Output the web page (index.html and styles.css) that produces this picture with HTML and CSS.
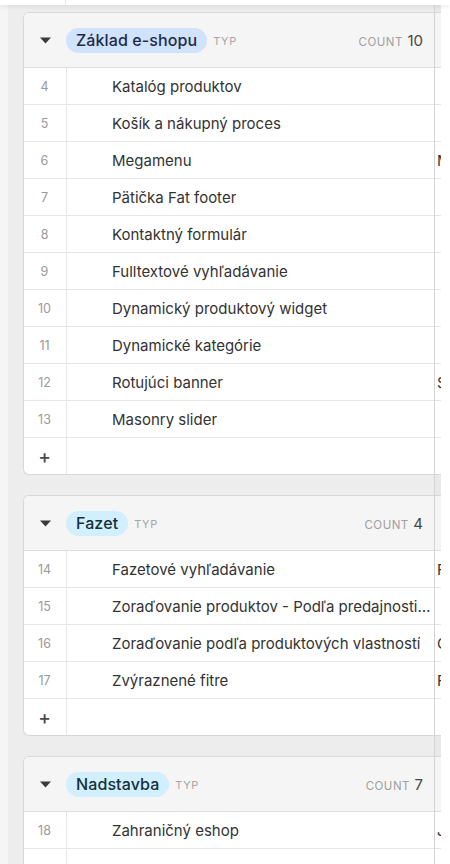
FILE: index.html
```html
<!DOCTYPE html>
<html lang="sk">
<head>
<meta charset="utf-8">
<title>Grid</title>
<link rel="stylesheet" href="styles.css">
</head>
<body>
<div class="topbar"><div class="topbar-col"></div></div>
<div class="grid">
  <div class="pane-left">
    <section class="group">
      <div class="group-head">
        <div class="chev"><svg width="11" height="7" viewBox="0 0 11 7"><path d="M0 0.5 H11 L5.5 6.5 Z" fill="#3a3a3a"/></svg></div>
        <span class="pill pill-blue">Základ e-shopu</span>
        <span class="typ">TYP</span>
        <span class="count"><span class="count-label">COUNT</span> <span class="count-num">10</span></span>
      </div>
      <div class="row"><div class="num">4</div><div class="name"><span class="txt">Katalóg produktov</span></div></div>
      <div class="row"><div class="num">5</div><div class="name"><span class="txt">Košík a nákupný proces</span></div></div>
      <div class="row"><div class="num">6</div><div class="name"><span class="txt">Megamenu</span></div></div>
      <div class="row"><div class="num">7</div><div class="name"><span class="txt">Pätička Fat footer</span></div></div>
      <div class="row"><div class="num">8</div><div class="name"><span class="txt">Kontaktný formulár</span></div></div>
      <div class="row"><div class="num">9</div><div class="name"><span class="txt">Fulltextové vyhľadávanie</span></div></div>
      <div class="row"><div class="num">10</div><div class="name"><span class="txt">Dynamický produktový widget</span></div></div>
      <div class="row"><div class="num">11</div><div class="name"><span class="txt">Dynamické kategórie</span></div></div>
      <div class="row"><div class="num">12</div><div class="name"><span class="txt">Rotujúci banner</span></div></div>
      <div class="row"><div class="num">13</div><div class="name"><span class="txt">Masonry slider</span></div></div>
      <div class="row row-add"><div class="num plus">+</div><div class="name"></div></div>
    </section>
    <section class="group">
      <div class="group-head">
        <div class="chev"><svg width="11" height="7" viewBox="0 0 11 7"><path d="M0 0.5 H11 L5.5 6.5 Z" fill="#3a3a3a"/></svg></div>
        <span class="pill pill-cyan">Fazet</span>
        <span class="typ">TYP</span>
        <span class="count"><span class="count-label">COUNT</span> <span class="count-num">4</span></span>
      </div>
      <div class="row"><div class="num">14</div><div class="name"><span class="txt">Fazetové vyhľadávanie</span></div></div>
      <div class="row"><div class="num">15</div><div class="name"><span class="txt">Zoraďovanie produktov - Podľa predajnosti a hodnotenia</span></div></div>
      <div class="row"><div class="num">16</div><div class="name"><span class="txt">Zoraďovanie podľa produktových vlastností</span></div></div>
      <div class="row"><div class="num">17</div><div class="name"><span class="txt">Zvýraznené fitre</span></div></div>
      <div class="row row-add"><div class="num plus">+</div><div class="name"></div></div>
    </section>
    <section class="group">
      <div class="group-head">
        <div class="chev"><svg width="11" height="7" viewBox="0 0 11 7"><path d="M0 0.5 H11 L5.5 6.5 Z" fill="#3a3a3a"/></svg></div>
        <span class="pill pill-cyan">Nadstavba</span>
        <span class="typ">TYP</span>
        <span class="count"><span class="count-label">COUNT</span> <span class="count-num">7</span></span>
      </div>
      <div class="row"><div class="num">18</div><div class="name"><span class="txt">Zahraničný eshop</span></div></div>
      <div class="row"><div class="num"></div><div class="name"></div></div>
    </section>
  </div>
  <div class="pane-right">
    <section class="group group-r">
      <div class="group-head-r"></div>
      <div class="row-r"></div>
      <div class="row-r"></div>
      <div class="row-r">Menu</div>
      <div class="row-r"></div>
      <div class="row-r"></div>
      <div class="row-r"></div>
      <div class="row-r"></div>
      <div class="row-r"></div>
      <div class="row-r">Slider</div>
      <div class="row-r"></div>
      <div class="row-r row-add"></div>
    </section>
    <section class="group group-r">
      <div class="group-head-r"></div>
      <div class="row-r">Filter</div>
      <div class="row-r"></div>
      <div class="row-r">Custom</div>
      <div class="row-r">Filter</div>
      <div class="row-r row-add"></div>
    </section>
    <section class="group group-r">
      <div class="group-head-r"></div>
      <div class="row-r">Jazyk</div>
      <div class="row-r"></div>
    </section>
  </div>
  <div class="rail"></div>
</div>
</body>
</html>
```
FILE: styles.css
```css
* { box-sizing: border-box; }
html, body {
  margin: 0;
  padding: 0;
  height: 100%;
  overflow: hidden;
}
body {
  background: #eeeeee;
  font-family: Inter, "Noto Sans", "Liberation Sans", sans-serif;
  color: #333;
}
.topbar {
  height: 5px;
  background: #ffffff;
  box-shadow: 0 2px 4px rgba(0, 0, 0, 0.07);
  position: relative;
  z-index: 2;
}
.topbar-col {
  width: 66px;
  height: 100%;
  border-right: 1px solid #e6e6e6;
}
.grid {
  display: flex;
  height: calc(100% - 5px);
}
.pane-left {
  width: 435px;
  flex: none;
  padding: 7px 0 0 23px;
  border-right: 1px solid #d4d4d4;
  background: linear-gradient(to right, #f5f5f5 8px, #ededed 8px);
}
.pane-right {
  width: 6px;
  flex: none;
  overflow: hidden;
  padding-top: 7px;
  background: #e9e9e9;
}
.rail {
  flex: 1;
  background: #ffffff;
}
.group {
  background: #fff;
  border: 1px solid #d8d8d8;
  border-right: none;
  border-radius: 6px 0 0 6px;
  margin-bottom: 20px;
  overflow: hidden;
}
.group-r {
  width: 200px;
  border-left: none;
  border-radius: 0;
}
.group-head, .group-head-r {
  height: 55px;
  background: #f5f5f5;
  border-bottom: 1px solid #dedede;
}
.group-head {
  display: flex;
  align-items: center;
  padding-right: 11px;
}
.chev {
  width: 42px;
  display: flex;
  justify-content: center;
  padding-top: 1px;
}
.pill {
  height: 25px;
  line-height: 25px;
  border-radius: 13px;
  padding: 0 10px;
  font-size: 16px;
  font-weight: 500;
  letter-spacing: 0.1px;
}
.pill-blue { background: #d1e2fb; color: #1c2b4c; }
.pill-cyan { background: #d1effc; color: #14303d; }
.typ {
  margin-left: 6px;
  font-size: 11px;
  letter-spacing: 0.6px;
  color: #a6a6a6;
  padding-top: 2px;
}
.count {
  margin-left: auto;
  white-space: nowrap;
}
.count-label {
  font-size: 11.5px;
  letter-spacing: 0.5px;
  color: #a0a0a0;
}
.count-num {
  font-size: 15px;
  color: #474747;
}
.row {
  display: flex;
  height: 37px;
  border-bottom: 1px solid #e6e6e6;
}
.row:last-child {
  border-bottom: none;
  height: 36px;
}
.num {
  width: 43px;
  flex: none;
  border-right: 1px solid #e6e6e6;
  display: flex;
  align-items: center;
  justify-content: center;
  font-size: 12.5px;
  color: #9a9a9a;
  padding-right: 1px;
}
.plus {
  font-size: 19px;
  font-weight: 500;
  color: #4a4a4a;
}
.name {
  flex: 1;
  min-width: 0;
  display: flex;
  align-items: center;
  padding: 0 1px 0 45px;
  font-size: 15px;
  color: #333;
}
.txt {
  white-space: nowrap;
  overflow: hidden;
  text-overflow: ellipsis;
  min-width: 0;
}
.row-r {
  height: 37px;
  border-bottom: 1px solid #e6e6e6;
  display: flex;
  align-items: center;
  padding-left: 2px;
  font-size: 15px;
  color: #333;
  white-space: nowrap;
}
.row-r:last-child {
  border-bottom: none;
  height: 36px;
}
```
